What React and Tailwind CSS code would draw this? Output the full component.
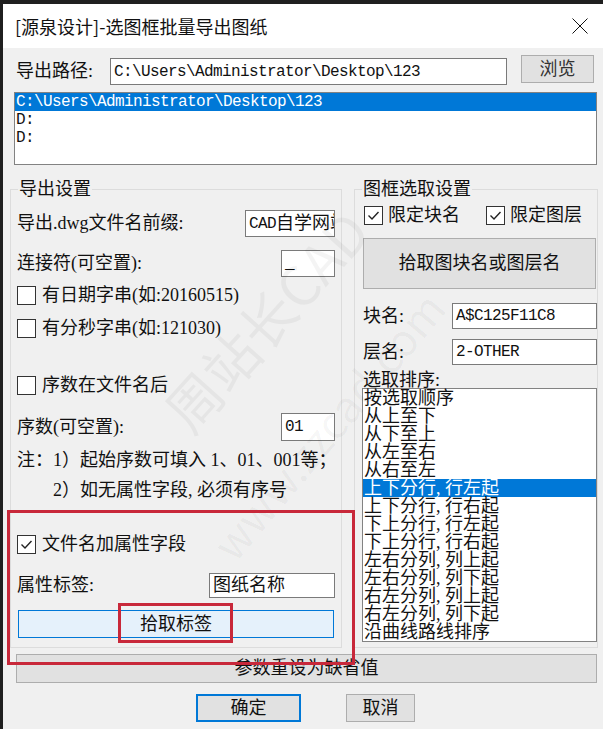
import React from "react";

const MONO = "font-['Liberation_Mono',monospace] text-[16px] tracking-[-0.6px]";

function Box({ checked }) {
  return (
    <span className="flex h-[19px] w-[19px] shrink-0 items-center justify-center border border-[#333] bg-white">
      {checked && (
        <svg width="15" height="15" viewBox="0 0 15 15" fill="none">
          <path d="M2.5 7.5 L6 11 L12.5 4" stroke="#222" strokeWidth="1.4" />
        </svg>
      )}
    </span>
  );
}

function Input({ className, children }) {
  return (
    <div className={"flex items-center overflow-hidden whitespace-nowrap border border-[#7a7a7a] bg-white px-[3px] " + className}>
      {children}
    </div>
  );
}

function Group({ title, className, children }) {
  return (
    <div className={"relative h-[459px] border border-[#dcdcdc] " + className}>
      <span className="absolute left-[7px] top-[-12px] bg-[#f0f0f0] px-[1px] leading-[22px]">{title}</span>
      {children}
    </div>
  );
}

const sortItems = [
  "按选取顺序",
  "从上至下",
  "从下至上",
  "从左至右",
  "从右至左",
  "上下分行, 行左起",
  "上下分行, 行右起",
  "下上分行, 行左起",
  "下上分行, 行右起",
  "左右分列, 列上起",
  "左右分列, 列下起",
  "右左分列, 列上起",
  "右左分列, 列下起",
  "沿曲线路线排序",
];

export default function App() {
  return (
    <div className="h-[729px] w-[603px] overflow-hidden bg-[#1f1f1f] pl-[3px] pt-[4px] font-['Liberation_Serif','Noto_Sans_CJK_SC',serif] text-[18px] text-[#111]">
      <div className="relative h-full bg-[#f0f0f0]">
        {/* title bar */}
        <div className="flex h-[44px] items-center justify-between bg-white pl-[12px] pr-[15px]">
          <span className="font-['Noto_Sans_CJK_SC',sans-serif] text-[18px] leading-none text-[#111]">[源泉设计]-选图框批量导出图纸</span>
          <svg width="16" height="16" viewBox="0 0 16 16" fill="none">
            <path d="M0.5 0.5 L15.5 15.5 M15.5 0.5 L0.5 15.5" stroke="#111" strokeWidth="1" />
          </svg>
        </div>

        {/* path row */}
        <div className="mt-[7px] flex h-[30px] items-start">
          <div className="ml-[13px] mt-[3px] flex h-[27px] w-[94px] items-center">导出路径:</div>
          <Input className={"mt-[3px] h-[27px] w-[397px] " + MONO}>C:\Users\Administrator\Desktop\123</Input>
          <div className="ml-[14px] flex h-[28px] w-[73px] items-center justify-center border border-[#adadad] bg-[#e1e1e1] text-[#333]">浏览</div>
        </div>

        {/* path list */}
        <div className={"ml-[11px] mt-[7px] h-[73px] w-[583px] border border-[#828282] bg-white " + MONO}>
          <div className="h-[18px] bg-[#0078d7] pl-[1px] leading-[18px] text-white">C:\Users\Administrator\Desktop\123</div>
          <div className="h-[18px] pl-[1px] leading-[18px]">D:</div>
          <div className="h-[18px] pl-[1px] leading-[18px]">D:</div>
        </div>

        {/* groups */}
        <div className="mt-[24px] flex">
          <Group title="导出设置" className="ml-[7px] w-[332px]">
            <div className="px-[6px]">
              <div className="mt-[20px] flex h-[27px] items-center justify-between">
                <span>导出.dwg文件名前缀:</span>
                <Input className="h-[27px] w-[90px]">
                  <span className={MONO}>CAD</span>自学网站
                </Input>
              </div>
              <div className="mt-[13px] flex h-[27px] items-center justify-between">
                <span>连接符(可空置):</span>
                <Input className={"h-[27px] w-[54px] " + MONO}>_</Input>
              </div>
              <div className="mt-[7px] flex h-[22px] items-center gap-[6px]">
                <Box />
                <span>有日期字串(如:20160515)</span>
              </div>
              <div className="mt-[11px] flex h-[22px] items-center gap-[6px]">
                <Box />
                <span>有分秒字串(如:121030)</span>
              </div>
              <div className="mt-[35px] flex h-[22px] items-center gap-[6px]">
                <Box />
                <span>序数在文件名后</span>
              </div>
              <div className="mt-[17px] flex h-[28px] items-center justify-between">
                <span>序数(可空置):</span>
                <Input className={"h-[28px] w-[54px] " + MONO}>01</Input>
              </div>
              <div className="mt-[7px] h-[24px] whitespace-nowrap leading-[24px]">注：1）起始序数可填入 1、01、001等；</div>
              <div className="mt-[6px] h-[24px] whitespace-nowrap pl-[36px] leading-[24px]">2）如无属性字段, 必须有序号</div>
              <div className="mt-[31px] flex h-[22px] items-center gap-[6px]">
                <Box checked />
                <span>文件名加属性字段</span>
              </div>
              <div className="mt-[18px] flex h-[25px] items-center justify-between">
                <span>属性标签:</span>
                <Input className="h-[25px] w-[126px]">图纸名称</Input>
              </div>
            </div>
            <div className="mx-[7px] mt-[12px] flex h-[28px] items-center justify-center border border-[#0078d7] bg-[#e5f1fb]">拾取标签</div>
          </Group>

          <Group title="图框选取设置" className="ml-[12px] w-[244px]">
            <div className="mt-[14px] flex h-[22px] items-center pl-[9px]">
              <Box checked />
              <span className="ml-[5px]">限定块名</span>
              <span className="ml-[26px]"><Box checked /></span>
              <span className="ml-[5px]">限定图层</span>
            </div>
            <div className="ml-[8px] mr-[1px] mt-[12px] flex h-[51px] items-center justify-center border border-[#adadad] bg-[#e1e1e1]">拾取图块名或图层名</div>
            <div className="mt-[14px] flex h-[26px] items-center justify-between pl-[8px]">
              <span>块名:</span>
              <Input className={"h-[26px] w-[145px] " + MONO}>A$C125F11C8</Input>
            </div>
            <div className="mt-[10px] flex h-[26px] items-center justify-between pl-[8px]">
              <span>层名:</span>
              <Input className={"h-[26px] w-[145px] " + MONO}>2-OTHER</Input>
            </div>
            <div className="h-[23px] pl-[8px] pt-[6px] leading-[18px]">选取排序:</div>
            <div className="ml-[7px] h-[254px] w-[235px] border border-[#828282] bg-white">
              {sortItems.map((t, i) => (
                <div
                  key={i}
                  className={"h-[18px] whitespace-nowrap pl-[1px] leading-[18px] " + (i === 5 ? "bg-[#0078d7] text-white" : "")}
                >
                  {t}
                </div>
              ))}
            </div>
          </Group>
        </div>

        {/* reset */}
        <div className="ml-[13px] mt-[6px] flex h-[29px] w-[581px] items-center justify-center border border-[#adadad] bg-[#e1e1e1]">参数重设为缺省值</div>

        {/* ok / cancel */}
        <div className="mt-[11px] flex">
          <div className="ml-[193px] flex h-[28px] w-[105px] items-center justify-center border-2 border-[#0078d7] bg-[#e1e1e1]">确定</div>
          <div className="ml-[45px] flex h-[28px] w-[69px] items-center justify-center border border-[#adadad] bg-[#e1e1e1]">取消</div>
        </div>

        {/* watermark */}
        <div className="pointer-events-none absolute left-[262px] top-[316px] -translate-x-1/2 -translate-y-1/2 rotate-[-48deg] whitespace-nowrap font-['Noto_Sans_CJK_SC',sans-serif] text-[55px] leading-none text-[rgba(0,0,0,0.045)]">周站长CAD</div>
        <div className="pointer-events-none absolute left-[324px] top-[421px] -translate-x-1/2 -translate-y-1/2 rotate-[-50deg] whitespace-nowrap font-['Noto_Sans_CJK_SC',sans-serif] text-[44px] leading-none text-[rgba(0,0,0,0.04)]">www.zzcad.com</div>

        {/* red annotation boxes */}
        <div className="pointer-events-none absolute left-[4px] top-[506px] h-[155px] w-[348px] border-[3px] border-[#c8283a]" />
        <div className="pointer-events-none absolute left-[115px] top-[599px] h-[40px] w-[115px] border-[3px] border-[#c8283a]" />
      </div>
    </div>
  );
}
